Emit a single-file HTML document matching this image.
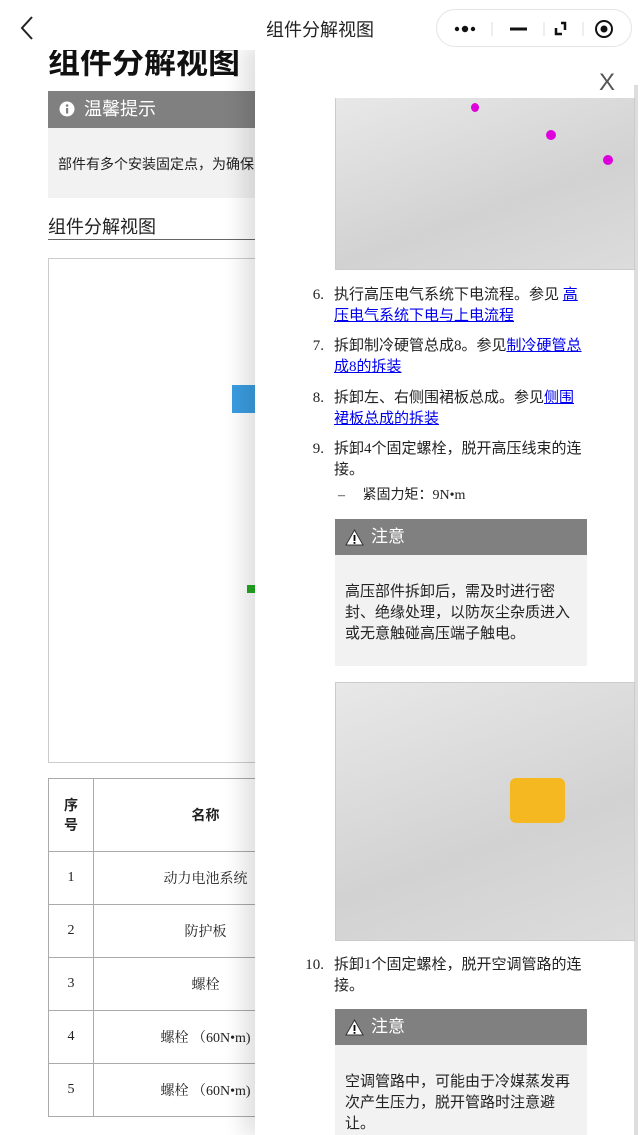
<!DOCTYPE html>
<html><head><meta charset="utf-8"><style>
*{margin:0;padding:0;box-sizing:border-box}
body{width:640px;height:1135px;overflow:hidden;position:relative;background:#fff;font-family:"Liberation Sans","Noto Sans CJK SC",sans-serif;color:#222}
.abs{position:absolute}
.nav{top:0;left:0;width:640px;height:50px;background:#fff;z-index:5}
.cap{left:436px;top:9px;width:196px;height:38px;border:1px solid #e5e5e5;border-radius:19px;background:#fff;z-index:6}
table{border-collapse:collapse;font-family:"Liberation Serif","Noto Serif CJK SC",serif;font-size:14px}
td{border:1px solid #aaa;text-align:center;height:53px}
.panel{left:255px;top:45px;width:385px;height:1090px;background:#fff;box-shadow:-12px 0 20px rgba(0,0,0,0.12)}
.step{position:absolute;font-size:15px;line-height:21px;font-family:"Liberation Serif","Noto Sans CJK SC",serif}
.step .n{position:absolute;left:-30px;width:20px;text-align:right}
a{color:#00e;text-decoration:underline}
.note{position:absolute;left:80px;width:252px;background:#f2f2f2}
.note .h{background:#808080;height:36px;color:#fff;font-size:17px;line-height:36px;padding-left:36px;position:relative}
.note .b{font-size:15px;line-height:21px;padding:0 10px}
.img{position:absolute;left:80px;width:300px;border:1px solid #ccc;background:linear-gradient(160deg,#e8e8e8,#d2d2d2 60%,#dcdcdc)}
</style></head><body>
<div class="abs nav">
 <svg class="abs" style="left:18px;top:15px" width="18" height="26"><path d="M14 2 L4 13 L14 24" stroke="#222" stroke-width="2" fill="none"/></svg>
 <div class="abs" style="left:0;width:640px;top:16px;text-align:center;font-size:18px">组件分解视图</div>
</div>
<div class="abs cap">
 <svg class="abs" style="left:14px;top:10px" width="170" height="18">
  <circle cx="6" cy="9" r="2.2" fill="#111"/><circle cx="14" cy="9" r="3.2" fill="#111"/><circle cx="22" cy="9" r="2.2" fill="#111"/>
  <line x1="41" y1="2" x2="41" y2="16" stroke="#ddd"/>
  <rect x="59" y="7.5" width="17" height="3" fill="#111"/>
  <line x1="93" y1="2" x2="93" y2="16" stroke="#ddd"/>
  <path d="M105 8 V14 H111 M110 3 H114 V10" stroke="#111" stroke-width="2.5" fill="none"/>
  <line x1="132" y1="2" x2="132" y2="16" stroke="#ddd"/>
  <circle cx="153" cy="9" r="8" stroke="#111" stroke-width="2" fill="none"/><circle cx="153" cy="9" r="3.5" fill="#111"/>
 </svg>
</div>
<div class="abs" style="left:48px;top:42px;font-size:32px;font-weight:bold;color:#111;line-height:40px">组件分解视图</div>
<div class="abs" style="left:48px;top:91px;width:220px;height:37px;background:#808080;color:#fff;font-size:18px;line-height:37px;padding-left:36px">温馨提示
 <svg class="abs" style="left:11px;top:10px" width="16" height="16"><circle cx="8" cy="8" r="7.5" fill="#fff"/><rect x="7" y="7" width="2.2" height="5.5" fill="#808080"/><circle cx="8.1" cy="4.5" r="1.3" fill="#808080"/></svg></div>
<div class="abs" style="left:48px;top:128px;width:220px;height:70px;background:#f2f2f2;font-size:14px;padding:26px 0 0 10px">部件有多个安装固定点，为确保</div>
<div class="abs" style="left:48px;top:213px;font-size:18px">组件分解视图</div>
<div class="abs" style="left:48px;top:239px;width:220px;height:1px;background:#666"></div>
<div class="abs" style="left:48px;top:258px;width:220px;height:505px;border:1px solid #ccc"></div>
<div class="abs" style="left:232px;top:385px;width:25px;height:28px;background:#3a9de0"></div>
<div class="abs" style="left:247px;top:585px;width:10px;height:8px;background:#2a2"></div>
<table class="abs" style="left:48px;top:778px;width:270px">
<tr><td style="width:45px;height:73px;font-weight:bold;font-family:'Liberation Sans','Noto Sans CJK SC',sans-serif">序<br>号</td><td style="font-weight:bold;font-family:'Liberation Sans','Noto Sans CJK SC',sans-serif">名称</td></tr>
<tr><td>1</td><td>动力电池系统</td></tr>
<tr><td>2</td><td>防护板</td></tr>
<tr><td>3</td><td>螺栓</td></tr>
<tr><td>4</td><td>螺栓 （60N•m)</td></tr>
<tr><td>5</td><td>螺栓 （60N•m)</td></tr>
</table>
<div class="abs panel">
 <div class="abs" style="left:344px;top:24px;font-size:24px;color:#555;font-family:'Liberation Sans',sans-serif">X</div>
 <div class="abs" style="left:379px;top:40px;width:4px;height:1050px;background:#ddd"></div>
 <div class="img" style="top:53px;height:172px;border-top:none"><div class="abs" style="left:210px;top:32px;width:10px;height:10px;border-radius:50%;background:#d0d"></div><div class="abs" style="left:267px;top:57px;width:10px;height:10px;border-radius:50%;background:#d0d"></div><div class="abs" style="left:135px;top:5px;width:8px;height:9px;border-radius:50%;background:#d0d"></div></div>
 <div class="step" style="left:79px;top:240px;width:250px"><span class="n">6.</span>执行高压电气系统下电流程。参见 <a>高压电气系统下电与上电流程</a></div>
 <div class="step" style="left:79px;top:291px;width:250px"><span class="n">7.</span>拆卸制冷硬管总成8。参见<a>制冷硬管总成8的拆装</a></div>
 <div class="step" style="left:79px;top:343px;width:250px"><span class="n">8.</span>拆卸左、右侧围裙板总成。参见<a>侧围裙板总成的拆装</a></div>
 <div class="step" style="left:79px;top:394px;width:250px"><span class="n">9.</span>拆卸4个固定螺栓，脱开高压线束的连接。</div>
 <div class="step" style="left:83px;top:440px;font-size:14px">–&nbsp;&nbsp;&nbsp;&nbsp;&nbsp;紧固力矩：9N•m</div>
 <div class="note" style="top:474px;height:147px"><div class="h"><svg class="abs" style="left:10px;top:10px" width="19" height="17"><path d="M9.5 1 L18 16 H1 Z" fill="#fff" stroke="#333"/><rect x="8.6" y="6" width="1.8" height="6" fill="#000"/><rect x="8.6" y="13" width="1.8" height="1.8" fill="#000"/></svg>注意</div>
  <div class="b" style="padding-top:26px">高压部件拆卸后，需及时进行密封、绝缘处理，以防灰尘杂质进入或无意触碰高压端子触电。</div></div>
 <div class="img" style="top:637px;height:259px"><div class="abs" style="left:174px;top:95px;width:55px;height:45px;background:#f5b820;border-radius:6px"></div></div>
 <div class="step" style="left:79px;top:910px;width:250px"><span class="n">10.</span>拆卸1个固定螺栓，脱开空调管路的连接。</div>
 <div class="note" style="top:964px;height:126px"><div class="h"><svg class="abs" style="left:10px;top:10px" width="19" height="17"><path d="M9.5 1 L18 16 H1 Z" fill="#fff" stroke="#333"/><rect x="8.6" y="6" width="1.8" height="6" fill="#000"/><rect x="8.6" y="13" width="1.8" height="1.8" fill="#000"/></svg>注意</div>
  <div class="b" style="padding-top:26px">空调管路中，可能由于冷媒蒸发再次产生压力，脱开管路时注意避让。</div></div>
</div>
</body></html>
